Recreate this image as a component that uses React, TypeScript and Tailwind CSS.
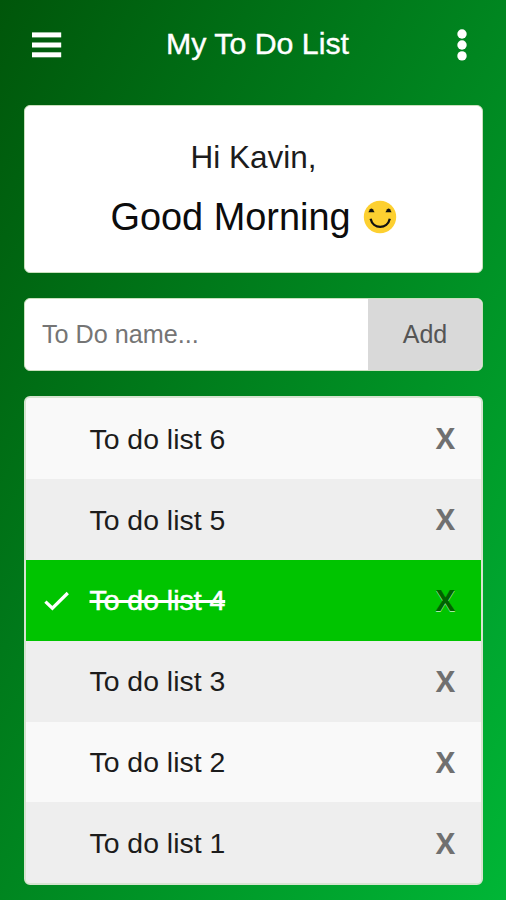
import { useState } from "react";

const INITIAL_TODOS = [
  { id: 6, name: "To do list 6", done: false },
  { id: 5, name: "To do list 5", done: false },
  { id: 4, name: "To do list 4", done: true },
  { id: 3, name: "To do list 3", done: false },
  { id: 2, name: "To do list 2", done: false },
  { id: 1, name: "To do list 1", done: false },
];

function MenuIcon() {
  return (
    <svg width="30" height="26" viewBox="0 0 30 26" fill="#fff" aria-hidden>
      <rect x="0" y="0.4" width="29.2" height="5" />
      <rect x="0" y="10.5" width="29.2" height="5" />
      <rect x="0" y="20.3" width="29.2" height="5" />
    </svg>
  );
}

function DotsIcon() {
  return (
    <svg width="10" height="32" viewBox="0 0 10 32" fill="#fff" aria-hidden>
      <circle cx="5" cy="5" r="4.7" />
      <circle cx="5" cy="16" r="4.7" />
      <circle cx="5" cy="26.9" r="4.7" />
    </svg>
  );
}

function Smile() {
  return (
    <svg width="34" height="34" viewBox="0 0 34 34" aria-hidden>
      <circle cx="17" cy="17" r="16.2" fill="#fdd030" />
      <path d="M5.4 12.2 L7 9.2 Q8.4 7.8 9.8 9.2 L11.6 12.2 Z" fill="#111" />
      <path d="M22.4 12.2 L24.2 9.2 Q25.6 7.8 27 9.2 L28.6 12.2 Z" fill="#111" />
      <path
        d="M7.6 18.8 C10 29.6 24.4 29.6 26.8 18.8"
        fill="none"
        stroke="#111"
        strokeWidth="2.3"
      />
    </svg>
  );
}

function CheckIcon() {
  return (
    <svg width="26" height="20" viewBox="0 0 26 20" fill="none" aria-hidden>
      <path d="M1.4 10.6 L8.4 17.2 L23.8 2" stroke="#fff" strokeWidth="3.2" />
    </svg>
  );
}

export default function App() {
  const [todos, setTodos] = useState(INITIAL_TODOS);
  const [name, setName] = useState("");

  const addTodo = () => {
    if (!name.trim()) return;
    setTodos([{ id: Date.now(), name, done: false }, ...todos]);
    setName("");
  };

  return (
    <div className="h-[900px] w-[506px] overflow-hidden bg-[linear-gradient(to_bottom_right,#00560a_0%,#00b636_100%)] font-['Liberation_Sans',Arial,sans-serif]">
      <header className="flex h-[88px] items-center pr-[39px] pl-[32px]">
        <button aria-label="Menu" className="mt-px w-[30px]">
          <MenuIcon />
        </button>
        <h1 className="ml-[104px] text-[30.3px] leading-none text-white [-webkit-text-stroke:0.4px_#fff]">
          My To Do List
        </h1>
        <button aria-label="More" className="mt-px ml-auto flex w-[10px]">
          <DotsIcon />
        </button>
      </header>

      <main className="flex flex-col gap-[25px] pt-[17px] pr-[23px] pl-6">
        <section className="flex h-[168px] flex-col items-center rounded-md border border-[#c9e0bd] bg-white text-[#1c1c1c]">
          <p className="mt-[33px] text-[31.5px] leading-[36px]">Hi Kavin,</p>
          <div className="mt-[19px] flex items-center gap-[12px]">
            <p className="text-[37.9px] leading-[46px] text-[#0c0c0c]">Good Morning</p>
            <div className="-mt-px">
              <Smile />
            </div>
          </div>
        </section>

        <div className="flex h-[73px] overflow-hidden rounded-md border border-[#c9e0bd] bg-white">
          <input
            value={name}
            onChange={(e) => setName(e.target.value)}
            placeholder="To Do name..."
            className="min-w-0 flex-1 px-[17px] text-[25.2px] outline-none placeholder:text-[#757575]"
          />
          <button onClick={addTodo} className="w-[114px] bg-[#d9d9d9] text-[25px] text-[#555]">
            Add
          </button>
        </div>

        <ul className="overflow-hidden rounded-md border-2 border-[#d6e4d0] bg-[#eee]">
          {todos.map((todo) => (
            <li
              key={todo.id}
              onClick={() =>
                setTodos(todos.map((t) => (t.id === todo.id ? { ...t, done: !t.done } : t)))
              }
              className={
                todo.done
                  ? "flex h-[80.9px] items-center bg-[#00c400] pt-px text-white"
                  : "flex h-[80.9px] items-center pt-px text-[#1c1c1c] odd:bg-[#f9f9f9] even:bg-[#eee]"
              }
            >
              <span className="flex w-[63.5px] pl-[18px]">{todo.done && <CheckIcon />}</span>
              <span
                className={
                  todo.done
                    ? "text-[28.4px] line-through decoration-[3px] [-webkit-text-stroke:0.5px_#fff]"
                    : "text-[28.4px]"
                }
              >
                {todo.name}
              </span>
              <button
                aria-label="Remove"
                onClick={(e) => {
                  e.stopPropagation();
                  setTodos(todos.filter((t) => t.id !== todo.id));
                }}
                className={
                  todo.done
                    ? "mr-[26px] mb-[2px] ml-auto font-['Open_Sans',sans-serif] text-[29px] leading-none font-bold text-[#006200] [text-shadow:0_1px_0_#a8e8a8]"
                    : "mr-[26px] mb-[2px] ml-auto font-['Open_Sans',sans-serif] text-[29px] leading-none font-bold text-[#707070]"
                }
              >
                X
              </button>
            </li>
          ))}
        </ul>
      </main>
    </div>
  );
}
